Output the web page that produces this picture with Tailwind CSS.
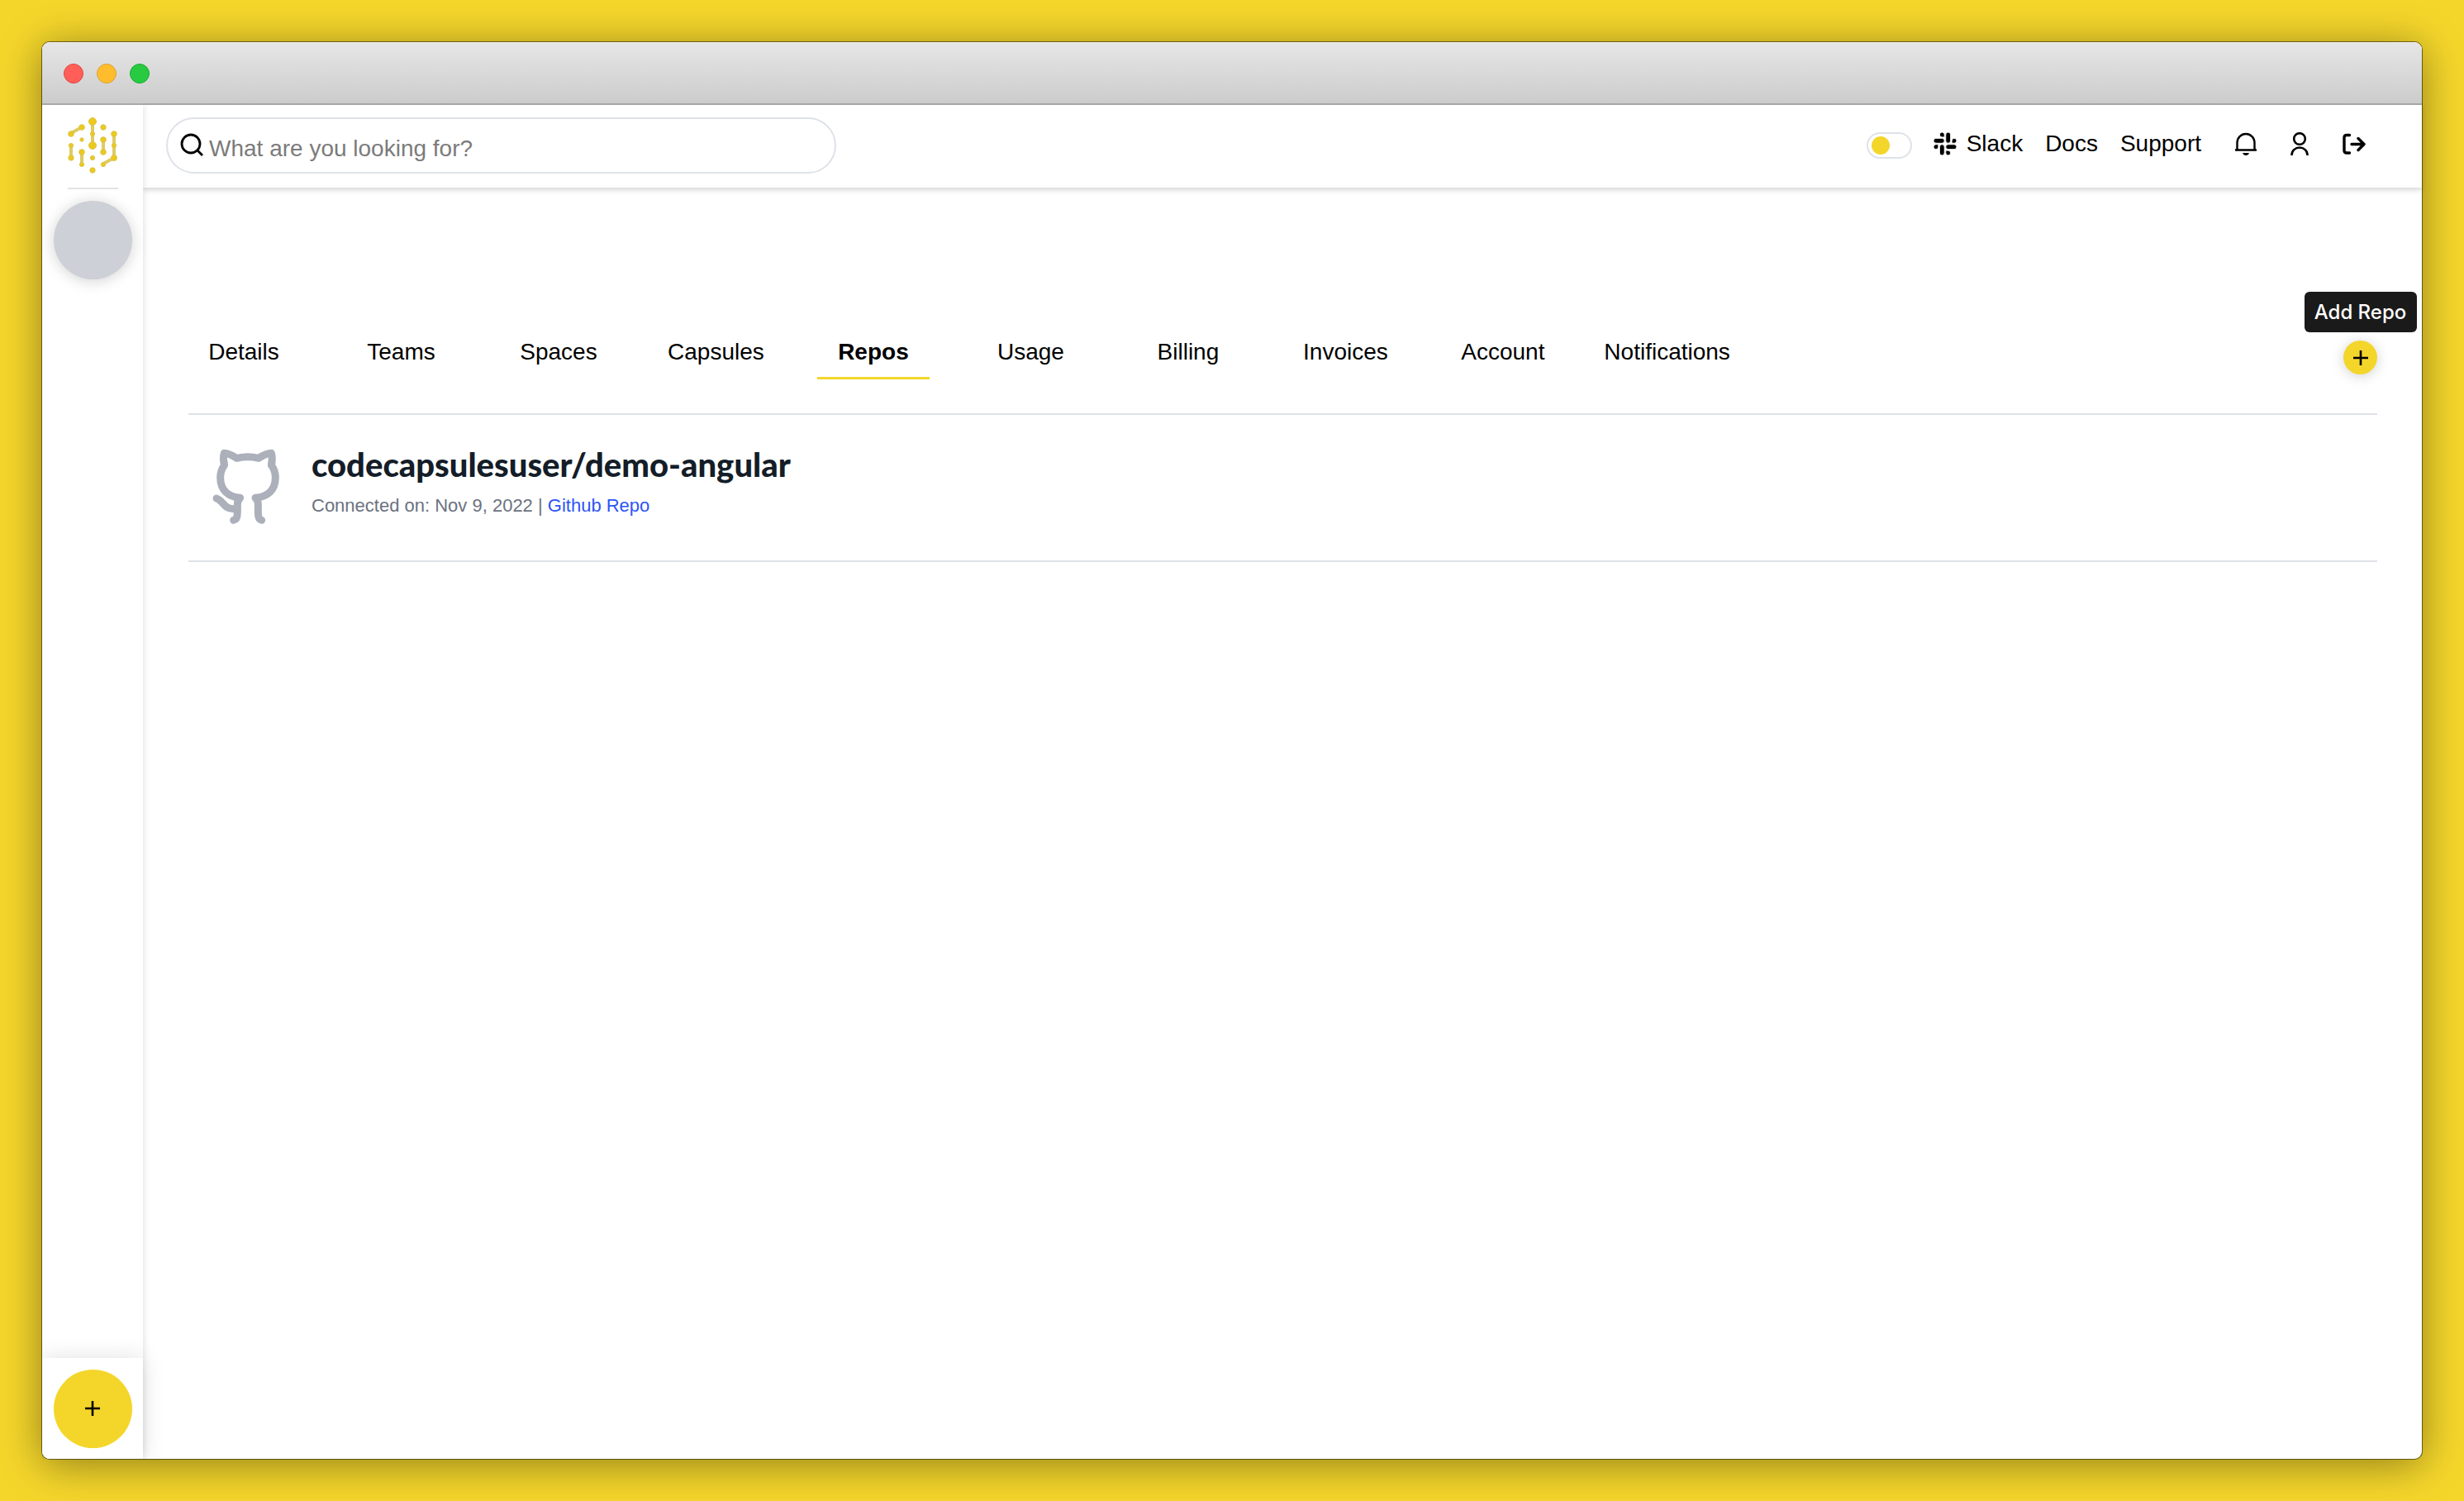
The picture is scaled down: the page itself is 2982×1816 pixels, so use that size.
<!DOCTYPE html>
<html lang="en">
<head>
<meta charset="utf-8">
<title>Repos</title>
<script src="https://cdn.jsdelivr.net/npm/@tailwindcss/browser@4"></script>
</head>
<body class="flex min-h-screen bg-[#f4d62b] p-[51px] font-['Liberation_Sans',sans-serif] text-[28px] leading-8 text-black">
<div class="flex flex-1 flex-col rounded-[9px] bg-white shadow-[0_0_0_1px_rgba(0,0,0,0.5),0_6px_50px_rgba(0,0,0,0.42)]">
  <!-- Title bar -->
  <div class="flex h-[76px] shrink-0 items-center gap-4 rounded-t-[9px] border-t border-b-2 border-t-[#f2f2f2] border-b-[#a9a9a9] bg-linear-to-b from-[#e6e6e6] to-[#cccccc] px-[26px]">
    <span class="size-6 rounded-full border border-[#e2463f] bg-[#ff5f58]"></span>
    <span class="size-6 rounded-full border border-[#dea034] bg-[#ffbd2e]"></span>
    <span class="size-6 rounded-full border border-[#1aad2e] bg-[#28ca41]"></span>
  </div>
  <div class="flex flex-1">
    <!-- Sidebar -->
    <aside class="flex w-[122px] shrink-0 flex-col items-center rounded-bl-[9px] bg-white shadow-[1px_0_8px_rgba(0,0,0,0.12)] [clip-path:inset(0_-24px_0_0)]">
      <a href="#" aria-label="Home" class="mt-[15px]">
        <svg class="h-[69px] w-[60px]" viewBox="82 142 60 69" fill="#ecca1a" stroke="#decb62" stroke-width="4">
          <path d="M86 161L99 154M112 147V175M86 177V191M99 184V198M125 169V183M138 162V191L125 198" fill="none"/>
          <g stroke="#dcc44c" stroke-width="1">
            <circle cx="112" cy="147" r="4.5"/><circle cx="112" cy="176" r="4.5"/>
            <circle cx="86" cy="162" r="3.3"/><circle cx="99" cy="154" r="3.3"/><circle cx="125" cy="154" r="3.2"/><circle cx="138" cy="162" r="3.3"/>
            <circle cx="112" cy="162" r="2.6"/><circle cx="99" cy="169" r="2.2"/><circle cx="125" cy="169" r="3.3"/>
            <circle cx="86" cy="176" r="2.6"/><circle cx="138" cy="176" r="2.6"/><circle cx="99" cy="184" r="3.3"/><circle cx="125" cy="184" r="3.3"/>
            <circle cx="86" cy="191" r="3.2"/><circle cx="112" cy="191" r="2.6"/><circle cx="138" cy="191" r="3.5"/>
            <circle cx="99" cy="199" r="2.6"/><circle cx="125" cy="199" r="2.6"/><circle cx="112" cy="206" r="3.2"/>
          </g>
        </svg>
      </a>
      <div class="mt-4 h-0.5 w-[61px] bg-[#e2e3e6]"></div>
      <button aria-label="Team" class="mt-3.5 size-[95px] rounded-full bg-[#cdd0d6] shadow-[0_2px_18px_rgba(0,0,0,0.18)]"></button>
      <div class="mt-auto flex h-[122px] w-full items-center justify-center rounded-bl-[9px] bg-white shadow-[0_0_28px_rgba(0,0,0,0.12)]">
        <button aria-label="Create" class="flex size-[95px] items-center justify-center rounded-full bg-[#f4d62b]">
          <svg class="size-5" viewBox="0 0 20 20" stroke="#000" stroke-width="2.6"><path d="M10 1V19M1 10H19"/></svg>
        </button>
      </div>
    </aside>
    <div class="flex min-w-0 flex-1 flex-col">
      <!-- Top bar -->
      <header class="flex h-[100px] shrink-0 items-center justify-between pr-[68px] pb-0.5 pl-7 shadow-[0_3px_6px_rgba(0,0,0,0.16)]">
        <label class="flex h-[68px] w-[811px] items-center rounded-full border-2 border-[#dee2e8] pl-[14px]">
          <svg class="size-8" viewBox="0 0 32 32" fill="none" stroke="#000" stroke-width="2.8"><circle cx="14" cy="14" r="11"/><path d="M21 21L28 28"/></svg>
          <input type="search" aria-label="Search" placeholder="What are you looking for?" class="mt-2 ml-1 h-10 min-w-0 flex-1 bg-transparent outline-none placeholder:text-[#7b7b7b]">
        </label>
        <nav class="flex items-center">
          <button role="switch" aria-checked="false" aria-label="Dark mode" class="flex h-8 w-[55px] items-center rounded-full border-2 border-[#dee2e8] px-1"><span class="size-[22px] rounded-full bg-[#f4d62b]"></span></button>
          <a href="#" class="ml-[26px] flex items-center gap-3 pb-1">
            <svg class="size-7" viewBox="0 0 24 24" fill="#000"><path d="M5.04 15.17a2.53 2.53 0 1 1-2.52-2.53h2.52zM6.3 15.17a2.52 2.52 0 0 1 5.04 0v6.31a2.52 2.52 0 0 1-5.04 0zM8.83 5.04a2.52 2.52 0 1 1 2.52-2.52v2.52zM8.83 6.31a2.52 2.52 0 0 1 0 5.05H2.52a2.52 2.52 0 0 1 0-5.05zM18.96 8.83a2.52 2.52 0 1 1 2.52 2.53h-2.52zM17.69 8.83a2.52 2.52 0 0 1-5.04 0V2.52a2.52 2.52 0 0 1 5.04 0zM15.17 18.96a2.52 2.52 0 1 1-2.52 2.52v-2.52zM15.17 17.69a2.52 2.52 0 0 1 0-5.04h6.31a2.52 2.52 0 0 1 0 5.04z" stroke="#fff" stroke-width=".8"/></svg>
            Slack
          </a>
          <a href="#" class="ml-[27px] pb-1">Docs</a>
          <a href="#" class="ml-[27px] pb-1">Support</a>
          <button aria-label="Notifications" class="ml-[41px] pb-1"><svg class="h-7 w-[26px]" viewBox="0 0 26 28" fill="none" stroke="#000" stroke-width="2.4"><path d="M0 21.5H26M2.5 21V12.5a10.5 10.5 0 0 1 21 0V21"/><path d="M9 25H17Q16 28 13 28Q10 28 9 25Z" fill="#000" stroke="none"/></svg></button>
          <button aria-label="Profile" class="ml-[41px] pb-1"><svg class="h-7 w-[22px]" viewBox="0 0 22 28" fill="none" stroke="#000" stroke-width="2.6"><circle cx="11" cy="8" r="6.8"/><path d="M1.5 28V27.5a9.5 9 0 0 1 19 0V28"/></svg></button>
          <button aria-label="Log out" class="ml-[41px] pb-1"><svg class="h-7 w-7" viewBox="0 0 28 28" fill="none" stroke="#000" stroke-width="3.4" stroke-linecap="round" stroke-linejoin="round"><path d="M8.5 3.5H5Q2 3.500 2 6.500V22Q2 25 5 25H8.500M11 14.500H26M19 7.500L26 14.500L19 21.500"/></svg></button>
        </nav>
      </header>
      <!-- Content -->
      <main class="flex flex-col pr-[54px] pl-[55px]">
        <div class="mt-[173px] flex justify-between border-b-2 border-[#dee2e8] pb-[41px]">
          <nav class="-ml-px flex w-[1867px] justify-between text-center">
            <a href="#" class="w-[136px] pt-2.5 pb-3.5">Details</a>
            <a href="#" class="w-[136px] pt-2.5 pb-3.5">Teams</a>
            <a href="#" class="w-[136px] pt-2.5 pb-3.5">Spaces</a>
            <a href="#" class="w-[136px] pt-2.5 pb-3.5">Capsules</a>
            <a href="#" aria-current="page" class="w-[136px] border-b-3 border-[#f4d62b] pt-2.5 pb-3.5 font-bold">Repos</a>
            <a href="#" class="w-[136px] pt-2.5 pb-3.5">Usage</a>
            <a href="#" class="w-[136px] pt-2.5 pb-3.5">Billing</a>
            <a href="#" class="w-[136px] pt-2.5 pb-3.5">Invoices</a>
            <a href="#" class="w-[136px] pt-2.5 pb-3.5">Account</a>
            <a href="#" class="min-w-[136px] pt-2.5 pb-3.5">Notifications</a>
          </nav>
          <div class="relative mt-3">
            <button aria-label="Add Repo" class="flex size-[41px] items-center justify-center rounded-full bg-[#f4d62b] shadow-[0_2px_16px_rgba(0,0,0,0.18)]">
              <svg class="size-5" viewBox="0 0 20 20" stroke="#000" stroke-width="2.6"><path d="M10 1V19M1 10H19"/></svg>
            </button>
            <div role="tooltip" class="absolute bottom-full left-1/2 mb-2.5 flex h-[49px] w-[136px] -translate-x-1/2 items-center justify-center rounded-md bg-[#1a1a1a] font-['Inter',sans-serif] text-[24px] font-medium whitespace-nowrap text-white">Add Repo</div>
          </div>
        </div>
        <article class="flex items-start border-b-2 border-[#dee2e8] pt-7 pb-7 pl-3">
          <svg class="size-[120px]" viewBox="0 0 360 360" fill="none" stroke="#abb0ba" stroke-width="27" stroke-linecap="round" stroke-linejoin="round"><path d="M128 298Q142 296 142 270V240Q142 226 152 217C110 213 80 190 80 143Q80 118 95 98Q88 76 94 55Q108 54 140 73Q180 64 219 73Q250 54 265 55Q271 76 265 98Q280 118 280 143C280 190 250 213 207 217Q217 226 217 240V270Q217 296 230 298M66 219C90 226 92 257 127 257H140"/></svg>
          <div class="ml-[17px] pt-2">
            <h2 class="font-['Lato',sans-serif] text-[40px] leading-[48px] font-black text-[#141d28]">codecapsulesuser/demo-angular</h2>
            <p class="mt-2.5 text-[22px] text-[#6b7280]">Connected on: Nov 9, 2022 | <a href="#" class="text-[#2d55f5]">Github Repo</a></p>
          </div>
        </article>
      </main>
    </div>
  </div>
</div>
</body>
</html>
